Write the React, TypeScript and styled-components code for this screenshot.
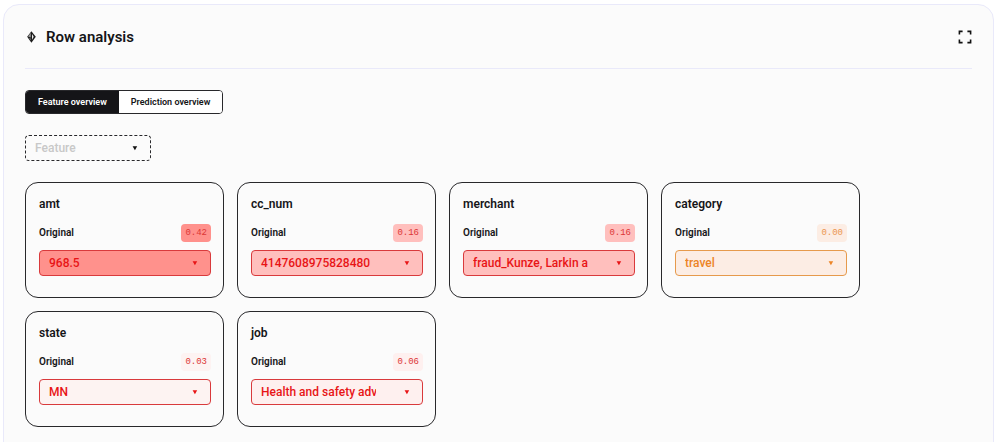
import React, { useState } from "react";
import styled, { createGlobalStyle } from "styled-components";

const GlobalStyle = createGlobalStyle`
  *, *::before, *::after { box-sizing: border-box; }
  body {
    margin: 0;
    background: #ffffff;
    color: #151518;
    font-family: Roboto, "Liberation Sans", sans-serif;
  }
  #root { overflow: hidden; }
  h1, h2 { margin: 0; }
  button, select { font-family: inherit; margin: 0; }
`;

const Panel = styled.section`
  min-height: calc(100vh + 16px);
  margin: 4px 6px 0 3px;
  padding: 0 21px 32px;
  border: 1px solid #e9e9fa;
  border-radius: 16px;
  background: #fbfbfb;
`;

const Header = styled.header`
  display: flex;
  align-items: center;
  justify-content: space-between;
  height: 64px;
  border-bottom: 1px solid #e9e9fa;
`;

const Heading = styled.div`
  display: flex;
  align-items: center;
  gap: 9px;
`;

const Title = styled.h1`
  font-size: 15px;
  font-weight: 600;
  line-height: 20px;
`;

const IconButton = styled.button`
  display: flex;
  padding: 0;
  border: 0;
  background: none;
  color: #111111;
  cursor: pointer;
`;

const Tabs = styled.div`
  display: inline-flex;
  height: 24px;
  margin-top: 21px;
  overflow: hidden;
  border: 1px solid #28282b;
  border-radius: 4px;
  background: #ffffff;
`;

const Tab = styled.button<{ $active: boolean }>`
  padding: 0 12px;
  border: 0;
  background: ${(p) => (p.$active ? "#151518" : "#ffffff")};
  color: ${(p) => (p.$active ? "#ffffff" : "#151518")};
  font-size: 9px;
  font-weight: 600;
  line-height: 12px;
  cursor: pointer;
`;

const FilterRow = styled.div`
  display: flex;
  margin: 21px 0;
`;

const SelectWrap = styled.div<{ $width?: string }>`
  position: relative;
  width: ${(p) => p.$width ?? "100%"};
`;

const Caret = styled.svg`
  position: absolute;
  top: 10px;
  right: 13px;
  pointer-events: none;
`;

const SelectBox = styled.select<{
  $ink: string;
  $line: string;
  $fill: string;
  $dashed?: boolean;
}>`
  display: block;
  width: 100%;
  height: 26px;
  padding: 0 46px 0 9px;
  appearance: none;
  border: 1px ${(p) => (p.$dashed ? "dashed" : "solid")} ${(p) => p.$line};
  border-radius: 4px;
  background: ${(p) => p.$fill};
  color: ${(p) => p.$ink};
  font-size: 12px;
  font-weight: 500;
  line-height: 16px;
  opacity: 1;
`;

const Cards = styled.div`
  display: grid;
  grid-template-columns: repeat(auto-fill, 199px);
  gap: 13px;
`;

const Card = styled.article`
  height: 116px;
  padding: 13px 12px 20px 13px;
  border: 1px solid #28282b;
  border-radius: 13px;
`;

const CardTitle = styled.h2`
  font-size: 12px;
  font-weight: 600;
  line-height: 16px;
`;

const CardRow = styled.div`
  display: flex;
  align-items: center;
  justify-content: space-between;
  margin: 12px 0 8px;
`;

const Label = styled.label`
  font-size: 10px;
  font-weight: 600;
  line-height: 18px;
`;

const Badge = styled.span<{ $fill: string; $ink: string }>`
  padding: 0 4px;
  border-radius: 4px;
  background: ${(p) => p.$fill};
  color: ${(p) => p.$ink};
  font-family: "Liberation Mono", monospace;
  font-size: 9px;
  line-height: 18px;
`;

interface Feature {
  name: string;
  value: string;
  score: string;
  fill: string;
  ink: string;
  line: string;
  badgeInk: string;
}

const RED = { ink: "#e81416", line: "#d93a3c", badgeInk: "#dc3636" };
const ORANGE = { ink: "#ec8426", line: "#e69a4c", badgeInk: "#eb9650" };

const features: Feature[] = [
  { name: "amt", value: "968.5", score: "0.42", fill: "#ff918c", ...RED },
  { name: "cc_num", value: "4147608975828480", score: "0.16", fill: "#ffbfbd", ...RED },
  { name: "merchant", value: "fraud_Kunze, Larkin and Sons", score: "0.16", fill: "#ffbfbd", ...RED },
  { name: "category", value: "travel", score: "0.00", fill: "#fcede4", ...ORANGE },
  { name: "state", value: "MN", score: "0.03", fill: "#fdf3f2", ...RED },
  { name: "job", value: "Health and safety adviser", score: "0.06", fill: "#fef0ef", ...RED },
];

const CaretMark = ({ color }: { color: string }) => (
  <Caret width="6" height="6" viewBox="0 0 6 6" aria-hidden="true">
    <path d="M.6 1.2h4.6L2.9 5.2z" fill={color} />
  </Caret>
);

const DiamondIcon = () => (
  <svg width="12" height="12" viewBox="0 0 12 12" aria-hidden="true">
    <path d="M6.4 .2 10.8 5.8 6.4 11.8 2.2 5.8z" fill="#1c1c1c" />
    <path d="M5.8 1.8v4.6L3 5.6z" fill="#999999" />
    <path d="M7 3 8.7 5.7 7 8.7z" fill="#eeeeee" />
    <path d="M3.9 7.1l1.9.5v2z" fill="#777777" />
  </svg>
);

const ExpandIcon = () => (
  <svg width="14" height="14" viewBox="0 0 14 14" fill="none" stroke="currentColor" strokeWidth="1.6" aria-hidden="true">
    <path d="M1.4 4.6V1.4H4.6M9.4 1.4h3.2V4.6M12.6 9.4v3.2H9.4M4.6 12.6H1.4V9.4" />
  </svg>
);

const tabs = ["Feature overview", "Prediction overview"];

export default function App() {
  const [active, setActive] = useState(tabs[0]);

  return (
    <>
      <GlobalStyle />
      <Panel>
        <Header>
          <Heading>
            <DiamondIcon />
            <Title>Row analysis</Title>
          </Heading>
          <IconButton type="button" aria-label="Full screen">
            <ExpandIcon />
          </IconButton>
        </Header>
        <Tabs role="tablist">
          {tabs.map((t) => (
            <Tab key={t} type="button" role="tab" aria-selected={t === active} $active={t === active} onClick={() => setActive(t)}>
              {t}
            </Tab>
          ))}
        </Tabs>
        <FilterRow>
          <SelectWrap $width="126px">
            <SelectBox aria-label="Feature" $ink="#c8c8c8" $line="#28282b" $fill="#fbfbfb" $dashed>
              <option>Feature</option>
            </SelectBox>
            <CaretMark color="#111111" />
          </SelectWrap>
        </FilterRow>
        <Cards>
          {features.map((f) => (
            <Card key={f.name}>
              <CardTitle>{f.name}</CardTitle>
              <CardRow>
                <Label htmlFor={f.name}>Original</Label>
                <Badge $fill={f.fill} $ink={f.badgeInk}>{f.score}</Badge>
              </CardRow>
              <SelectWrap>
                <SelectBox id={f.name} $ink={f.ink} $line={f.line} $fill={f.fill}>
                  <option>{f.value}</option>
                </SelectBox>
                <CaretMark color={f.ink} />
              </SelectWrap>
            </Card>
          ))}
        </Cards>
      </Panel>
    </>
  );
}
